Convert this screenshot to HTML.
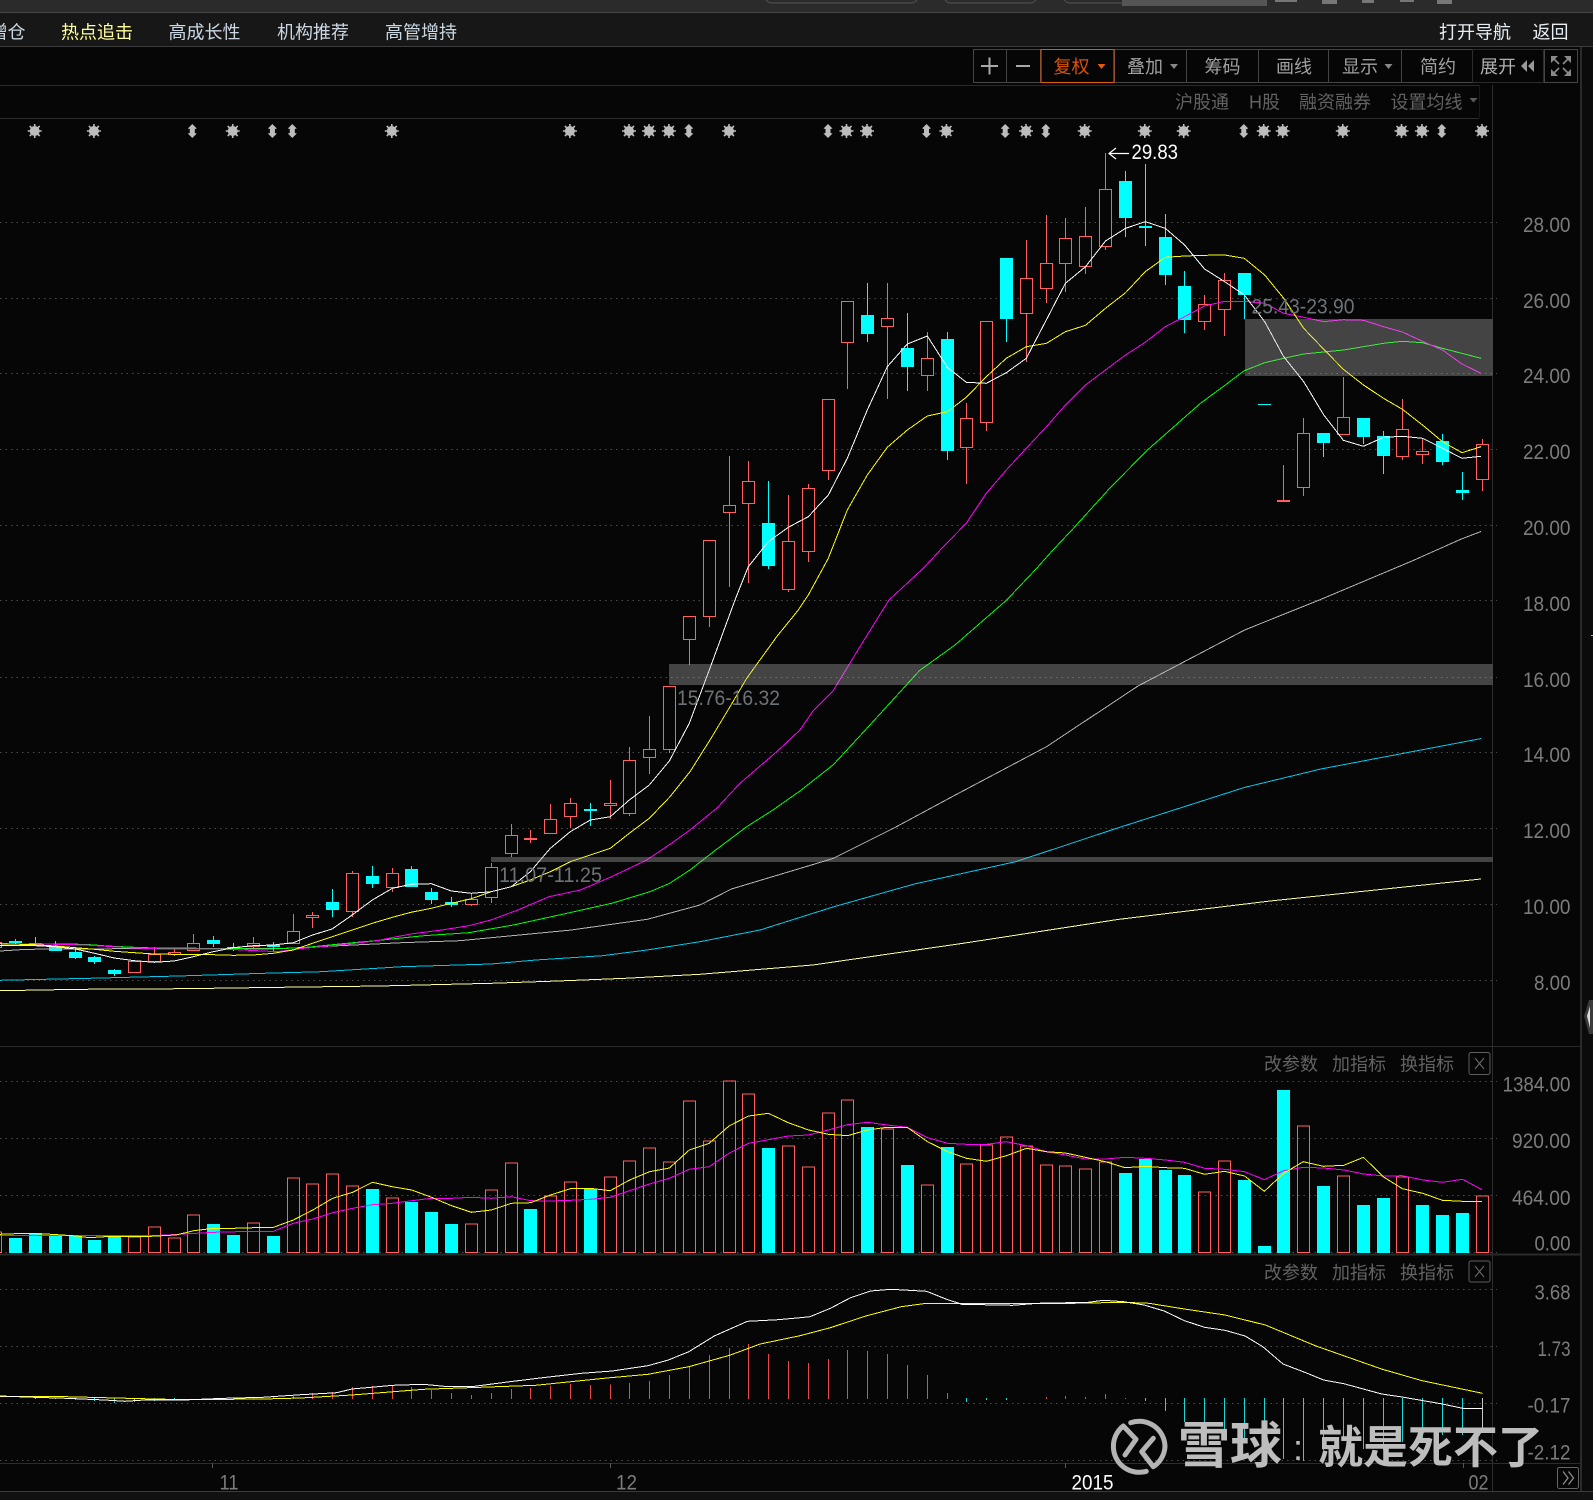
<!DOCTYPE html>
<html lang="zh-CN">
<head>
<meta charset="utf-8">
<title>K线图</title>
<style>
html,body{margin:0;padding:0;width:1593px;height:1500px;overflow:hidden;background:#060606}
svg{display:block}
text{font-family:"Liberation Sans","Noto Sans CJK SC",sans-serif}
.ax{font-size:21px;fill:#7c7c7c}
.cn{font-size:18px}
.nv{font-size:18px;fill:#cbd8e4}
.tb{font-size:18px;fill:#a0a0a0}
.op{font-size:18px;fill:#626262}
.lb{font-size:21px;fill:#6d7277}
.ma{fill:none;stroke-width:1;stroke-linejoin:round;shape-rendering:crispEdges}
</style>
</head>
<body>
<svg xmlns="http://www.w3.org/2000/svg" width="1593" height="1500" viewBox="0 0 1593 1500">
<rect width="1593" height="1500" fill="#060606"/>
<!-- top chrome -->
<rect width="1593" height="12" fill="#2b2b2b"/>
<rect y="12" width="1593" height="1" fill="#484848"/>
<rect y="13" width="1593" height="33" fill="#171717"/>
<rect y="46" width="1593" height="1" fill="#3c3c3c"/>
<g fill="none" stroke="#555">
<rect x="765" y="-12" width="153" height="15" rx="7"/>
<rect x="944" y="-12" width="93" height="15" rx="7"/>
<rect x="1063" y="-12" width="120" height="15" rx="7"/>
</g>
<rect x="1122" y="0" width="145" height="6" fill="#555"/>
<g fill="#777">
<rect x="1275" y="0" width="22" height="2"/><rect x="1322" y="0" width="15" height="4"/><rect x="1362" y="0" width="12" height="3"/><rect x="1400" y="0" width="14" height="2"/><rect x="1437" y="0" width="15" height="4"/>
</g>
<text class="nv" x="-10.5" y="38.5">增仓</text>
<text class="nv" x="61" y="38.5" style="fill:#ffff99">热点追击</text>
<text class="nv" x="168.5" y="38.5">高成长性</text>
<text class="nv" x="277" y="38.5">机构推荐</text>
<text class="nv" x="385" y="38.5">高管增持</text>
<text class="nv" x="1439" y="38.5" style="fill:#e6eef4">打开导航</text>
<text class="nv" x="1532.5" y="38.5" style="fill:#e6eef4">返回</text>

<!-- toolbar -->
<g fill="none" stroke="#454545">
<rect x="973.5" y="49.5" width="33" height="33"/>
<rect x="1006.5" y="49.5" width="34" height="33"/>
<rect x="1114.5" y="49.5" width="72" height="33"/>
<rect x="1186.5" y="49.5" width="72" height="33"/>
<rect x="1258.5" y="49.5" width="70" height="33"/>
<rect x="1328.5" y="49.5" width="73" height="33"/>
<rect x="1401.5" y="49.5" width="71" height="33"/>
<rect x="1472.5" y="49.5" width="71" height="33" stroke="#2c2c2c"/>
<rect x="1544.5" y="49.5" width="33" height="33"/>
</g>
<rect x="1041" y="49.5" width="73" height="33" fill="none" stroke="#dd5a10"/>
<path d="M981 66h17M989.5 57.5v17M1016 66h14" stroke="#a8a8a8" stroke-width="2" fill="none"/>
<text class="tb" x="1053.5" y="73" style="fill:#d9520c">复权</text>
<path d="M1097.5 64h8l-4 5z" fill="#e05a10"/>
<text class="tb" x="1127" y="73">叠加</text>
<path d="M1170 64h8l-4 5z" fill="#888"/>
<text class="tb" x="1204.5" y="73">筹码</text>
<text class="tb" x="1276" y="73">画线</text>
<text class="tb" x="1342" y="73">显示</text>
<path d="M1384.5 64h8l-4 5z" fill="#888"/>
<text class="tb" x="1420" y="73">简约</text>
<text class="tb" x="1480" y="73" style="fill:#b0b0b0">展开</text>
<path d="M1527 60v12l-6-6zM1534 60v12l-6-6z" fill="#999"/>
<g fill="#8a8a8a">
<path d="M1551 56h7l-7 7zM1571 56h-7l7 7zM1551 76h7l-7-7zM1571 76h-7l7-7z"/>
</g>
<path d="M1553 58l6 6M1569 58l-6 6M1553 74l6-6M1569 74l-6-6" stroke="#8a8a8a" stroke-width="1.6" fill="none"/>

<!-- row 2 -->
<text class="op" x="1175" y="108.5">沪股通</text>
<text class="op" x="1249" y="108.5">H股</text>
<text class="op" x="1299" y="108.5">融资融券</text>
<text class="op" x="1390.5" y="108.5">设置均线</text>
<path d="M1469.5 98h8l-4 4.5z" fill="#5c5c5c"/>
<path d="M0 85.5H1479M0 118.5H1479" stroke="#2a2a2a"/>
<path d="M1479.5 85V118" stroke="#181818"/>

<!-- panel frame -->
<path d="M1492.5 85V1491.5" stroke="#2e2e2e"/>
<rect x="1580" y="47" width="2" height="1444" fill="#2a2a2a"/>
<rect x="1582" y="47" width="11" height="1453" fill="#0b0b0b"/>
<path d="M0 1046.5H1580M0 1463.5H1580" stroke="#2c2c2c"/>
<rect y="1253.5" width="1580" height="2" fill="#2a2a2a"/>
<rect y="1491" width="1593" height="1" fill="#3c3c3c"/>
<rect y="1492" width="1593" height="8" fill="#111"/>
<path d="M1589 1000l-5 16 5 18h4v-34z" fill="#3a3a3a"/>
<path d="M1590 1006l-3 10 3 12z" fill="#ddd"/>
<rect x="1591" y="635" width="2" height="1" fill="#cc0"/>

<!-- grid -->
<g stroke="#4c4c4c" stroke-dasharray="1.5 4" fill="none">
<path d="M0 222.5H1497M0 298.5H1497M0 373.5H1497M0 449.5H1497M0 525.5H1497M0 600.5H1497M0 677.5H1497M0 752.5H1497M0 828.5H1497M0 904.5H1497M0 980.5H1497"/>
<path d="M0 1081.5H1497M0 1138.5H1497M0 1195.5H1497M0 1252.5H1497"/>
<path d="M0 1289.5H1497M0 1346.5H1497M0 1403.5H1497M0 1460.5H1497"/>
</g>

<!-- signal marks -->
<defs>
<g id="st"><circle r="5" fill="#bcbcbc"/><path d="M0-7V7M-7 0H7M-5-5L5 5M-5 5L5-5" stroke="#bcbcbc" stroke-width="1.6"/></g>
<path id="ar" d="M0-7l4.5 4.5-2 .5v4l2 .5-4.5 4.5-4.5-4.5 2-.5v-4l-2-.5z" fill="#bcbcbc"/>
</defs>
<g transform="translate(0 131)">
<use href="#st" x="34.7"/><use href="#st" x="93.9"/><use href="#ar" x="192.3"/><use href="#st" x="232.7"/><use href="#ar" x="272.4"/><use href="#ar" x="292.3"/><use href="#st" x="391.8"/><use href="#st" x="569.9"/><use href="#st" x="629"/><use href="#st" x="649"/><use href="#st" x="668.9"/><use href="#ar" x="688.8"/><use href="#st" x="729"/><use href="#ar" x="828"/><use href="#st" x="846.5"/><use href="#st" x="867"/><use href="#ar" x="926.5"/><use href="#st" x="946.4"/><use href="#ar" x="1005.2"/><use href="#st" x="1026"/><use href="#ar" x="1045.8"/><use href="#st" x="1084.7"/><use href="#st" x="1144.8"/><use href="#st" x="1183.7"/><use href="#ar" x="1243.8"/><use href="#st" x="1263.7"/><use href="#st" x="1282.7"/><use href="#st" x="1342.8"/><use href="#st" x="1401.5"/><use href="#st" x="1421.9"/><use href="#ar" x="1441.8"/><use href="#st" x="1482"/>
</g>

<!-- red wicks -->
<path fill="none" stroke="#ff5f5f" d="M1482.5 439V491M1422.5 439V464M1402.5 399V460M1343.5 377V434M1303.5 418V496M1283.5 465V501M1224.5 273V336M1204.5 295V330M1105.5 153V250M1085.5 207V274M1065.5 218V292M1046.5 215V303M1026.5 240V362M986.5 321V431M966.5 403V484M927.5 332V391M887.5 283V399M847.5 301V389M828.5 399V480M808.5 484V562M788.5 495V592M748.5 461V583M729.5 456V587M709.5 540V627M689.5 616V665M669.5 686V753M649.5 716V774M629.5 747V816M610.5 780V819M570.5 798V828M550.5 804V833M530.5 830V843M511.5 824V857M491.5 863V903M471.5 893V906M392.5 868V892M352.5 871V917M312.5 912V928M293.5 914V944M253.5 937V948M193.5 934V951M174.5 949V956M154.5 947V963M134.5 961V973"/>
<!-- red bodies -->
<path fill="#060606" stroke="#ff5f5f" d="M1476.5 444.5h12v35h-12zM1416.5 451.5h12v3h-12zM1396.5 429.5h12v27h-12zM1337.5 417.5h12v17h-12zM1297.5 433.5h12v54h-12zM1218.5 280.5h12v29h-12zM1198.5 304.5h12v17h-12zM1099.5 189.5h12v57h-12zM1079.5 236.5h12v30h-12zM1059.5 238.5h12v25h-12zM1040.5 263.5h12v25h-12zM1020.5 278.5h12v35h-12zM980.5 321.5h12v101h-12zM960.5 418.5h12v29h-12zM921.5 358.5h12v17h-12zM881.5 318.5h12v8h-12zM841.5 301.5h12v41h-12zM822.5 399.5h12v71h-12zM802.5 488.5h12v63h-12zM782.5 541.5h12v48h-12zM742.5 481.5h12v22h-12zM723.5 505.5h12v7h-12zM703.5 540.5h12v76h-12zM683.5 616.5h12v23h-12zM663.5 686.5h12v63h-12zM643.5 749.5h12v8h-12zM623.5 760.5h12v53h-12zM604.5 803.5h12v2h-12zM564.5 803.5h12v13h-12zM544.5 819.5h12v14h-12zM505.5 835.5h12v18h-12zM485.5 867.5h12v30h-12zM465.5 899.5h12v5h-12zM386.5 873.5h12v14h-12zM346.5 873.5h12v38h-12zM306.5 915.5h12v2h-12zM287.5 931.5h12v12h-12zM247.5 943.5h12v3h-12zM187.5 943.5h12v7h-12zM168.5 952.5h12v2h-12zM148.5 954.5h12v7h-12zM128.5 961.5h12v11h-12zM-10.5 942.5h12v5h-12z"/>
<path fill="#ff5f5f" d="M1277 500h13v2h-13zM524 838h13v2h-13z"/>
<!-- cyan wicks -->
<path fill="none" stroke="#00ffff" d="M1462.5 472V500M1442.5 434V465M1383.5 431V474M1363.5 418V444M1323.5 433V457M1244.5 273V319M1184.5 271V333M1165.5 214V285M1145.5 164V246M1125.5 171V237M1006.5 258V342M947.5 332V460M907.5 313V391M867.5 283V342M768.5 481V569M590.5 803V826M451.5 897V907M431.5 888V904M411.5 866V887M372.5 866V888M332.5 889V917M273.5 942V951M233.5 943V951M213.5 936V947M114.5 969V976M94.5 956V964M75.5 948V959M55.5 941V951M35.5 937V945M15.5 939V944"/>
<!-- cyan bodies -->
<path fill="#00ffff" d="M1456 490h13v3h-13zM1436 441h13v21h-13zM1377 436h13v20h-13zM1357 418h13v19h-13zM1317 433h13v10h-13zM1258 404h13v1h-13zM1238 273h13v22h-13zM1178 286h13v34h-13zM1159 237h13v38h-13zM1139 226h13v2h-13zM1119 181h13v37h-13zM1000 258h13v61h-13zM941 339h13v112h-13zM901 348h13v19h-13zM861 315h13v19h-13zM762 523h13v43h-13zM584 809h13v2h-13zM445 902h13v3h-13zM425 892h13v8h-13zM405 869h13v18h-13zM366 876h13v8h-13zM326 902h13v8h-13zM267 945h13v2h-13zM227 947h13v2h-13zM207 940h13v4h-13zM108 970h13v4h-13zM88 957h13v5h-13zM69 952h13v6h-13zM49 946h13v5h-13zM29 943h13v2h-13zM9 941h13v2h-13z"/>

<!-- moving averages -->
<polyline class="ma" stroke="#ffff99" points="0,990.7 80,989.3 183,988.7 281,987.3 379.5,986 491,983.3 558,981 625,978.3 700,974.3 812.8,965 965,943 1117.6,919.5 1270,901 1481,879"/>
<polyline class="ma" stroke="#00c8ea" points="0,980.3 89,978.3 178.6,976 263.4,973.3 321.4,971.7 401.8,966.7 491,964 535.7,960 602.7,955.7 647,950 700,941.7 760,930 833,907 914.4,884 1016,861.6 1117.6,828 1244.6,787.4 1320.8,769 1481,738.6"/>
<polyline class="ma" stroke="#b4b4b4" points="0,951 26.8,949.3 75.9,949 178.6,948.3 285.7,948.3 339.3,945.7 401.8,942.7 459.8,940.7 526.8,934.3 571.4,930 611.6,924.3 647.3,919.3 700,905 731.5,889 833,858.5 894,828 960,792.5 1046.5,746.7 1138,686 1244.6,630 1320.8,599.4 1412,561 1461.4,539 1481,531.5"/>
<polyline class="ma" stroke="#00ff00" points="0,943.7 84.8,944.3 107,946 142.9,947.7 267.9,949 303.6,947.7 339.3,944 375,940.7 424,935.7 468.8,932.7 513.4,925 567,913.3 611.6,903.3 650,891.7 669.6,883.3 690,870 720,846.7 746.7,826.7 773,810 800,791 833,765 864,731.5 919.5,670.6 955,645 1006.7,600 1036.7,568.3 1050,553.3 1062.4,540 1071.9,530 1109.7,488.3 1147.5,450 1181.5,420 1200.5,403.3 1223,386.7 1244.3,370.7 1264.7,362.7 1283.7,358.3 1303.7,354 1323.8,352 1343.4,350 1363.5,346.7 1383.5,343.3 1402.4,341.3 1422.5,342.7 1442.5,348.3 1481,358.3"/>
<polyline class="ma" stroke="#ff00ff" points="0,943.7 58,944.3 84.8,945 134,948 165,949 223,949 276.8,951.7 303.6,948.3 339.3,945 375,941 410.7,934 442,930 468.8,925.7 491,920 517.9,910 549,896.7 580.4,890 611.6,876.7 646.7,860 666.7,846.7 690,830 716.7,808.3 740,783.3 776.7,751.7 800,730 813,711 833,691 861,645 889,600 923.3,568.3 943.3,546.7 966.3,523.3 986.3,493.3 1006.3,470 1026.3,448.3 1046.5,426.7 1065.4,405 1085.5,385 1105.5,370 1125.6,355 1145.2,342.3 1165.3,326.7 1184.6,316.7 1204.6,306 1224.7,301.3 1244.3,301.3 1264.7,303.3 1283.7,313.3 1303.7,317.3 1323.8,321.7 1343.4,319.7 1363.5,320.3 1383.5,326.7 1402.4,332 1422.5,341.3 1442.5,350 1462,364 1481,373.3"/>
<polyline class="ma" stroke="#ffff00" points="0,943.7 35.3,944.7 55.4,946 75.4,947.7 94.6,949.3 114.3,951.3 134.4,952.7 154.5,954 174,954.3 193.3,954.3 213.4,954.7 233,955.3 253,955 273.2,953.3 293.3,950 312.5,943.3 332.1,936.7 352.2,930 372.3,923.3 392.4,917.3 411,912.3 431.3,908.3 451.3,903.3 471.4,898.7 491.3,891.7 511.3,886.7 530.3,880 550.3,871.7 570.3,861.7 590.3,855 610.3,848.3 629.3,833.3 649.3,818.3 670,796.7 690,771.7 710,740 730,706.7 746.7,678.3 776.7,636.7 798.3,610 808.3,595 828.3,558.3 847.3,510 867.3,475 887.3,447.3 907.3,430 927.3,416 947.3,411.7 966.3,397.3 986.3,376.7 1006.3,358.3 1026.3,346.7 1046.5,343.3 1065.4,331.7 1085.5,325.3 1105.5,308.3 1125.6,292.7 1145.2,271.7 1165.3,257.3 1184.6,256 1204.6,255.3 1224.7,255 1244.3,258.3 1264.7,275 1283.7,298.3 1303.7,328.3 1323.8,349.3 1343.4,369.3 1363.5,385 1383.5,398.3 1402.4,409.3 1422.5,425 1442.5,441.7 1462,452.7 1481,446.7"/>
<polyline class="ma" stroke="#ffffff" points="0,945.7 35.3,945.7 55.4,946.7 75.4,949 94.6,953.3 114.3,958 134.4,960.7 154.5,962.3 174,961 193.3,956.7 213.4,951.7 233,947.7 253,945.7 273.2,945 293.3,942.7 312.5,935 332.1,929 352.2,915 372.3,900 392.4,888.3 411,884.3 431.3,883.7 451.3,891 471.4,893.3 491.3,891.7 511.3,886.7 530.3,871.7 550.3,848.3 570.3,831.7 590.3,820 610.3,816.7 629.3,800 649.3,785 669.3,761 689.3,723.3 709.3,670 735,600 748.3,566.7 768.3,541.7 788.3,527.3 808.3,516.7 828.3,495 847.3,458.3 867.3,410 887.3,366.7 907.3,344 927.3,336 947.3,367.3 966.3,382.3 986.3,383.3 1006.3,372.7 1026.3,358.3 1046.3,320 1065.4,283.3 1085.5,266.7 1105.5,241 1125.6,228.3 1145.2,221.7 1165.3,228.3 1184.6,245 1204.6,269 1224.7,281.7 1244.3,295 1264.7,321.7 1283.7,356.7 1303.7,381.7 1323.8,415 1343.4,440.3 1363.5,446.3 1383.5,437.3 1402.4,436.3 1422.5,438.3 1442.5,448.3 1462,458.3 1481,456.3"/>

<!-- price zones -->
<g fill="rgba(190,190,190,.34)">
<rect x="1245" y="319" width="247.5" height="57"/>
<rect x="669" y="664" width="823.5" height="21"/>
<rect x="491" y="857" width="1001.5" height="5"/>
</g>
<text class="lb" x="1251.5" y="313.5" textLength="103" lengthAdjust="spacingAndGlyphs">25.43-23.90</text>
<text class="lb" x="677" y="705" textLength="103" lengthAdjust="spacingAndGlyphs">15.76-16.32</text>
<text class="lb" x="499" y="882" textLength="103" lengthAdjust="spacingAndGlyphs">11.07-11.25</text>

<!-- high marker -->
<path d="M1129 153.5H1109M1116 148l-7 5.5 7 5.5" fill="none" stroke="#fff" stroke-width="1.2"/>
<text x="1131.5" y="159" font-size="21" fill="#fff" textLength="46.5" lengthAdjust="spacingAndGlyphs">29.83</text>

<!-- price axis -->
<g class="ax">
<text class="ax" x="1523" y="232" textLength="47.5" lengthAdjust="spacingAndGlyphs">28.00</text>
<text class="ax" x="1523" y="308" textLength="47.5" lengthAdjust="spacingAndGlyphs">26.00</text>
<text class="ax" x="1523" y="383" textLength="47.5" lengthAdjust="spacingAndGlyphs">24.00</text>
<text class="ax" x="1523" y="459" textLength="47.5" lengthAdjust="spacingAndGlyphs">22.00</text>
<text class="ax" x="1523" y="535" textLength="47.5" lengthAdjust="spacingAndGlyphs">20.00</text>
<text class="ax" x="1523" y="611" textLength="47.5" lengthAdjust="spacingAndGlyphs">18.00</text>
<text class="ax" x="1523" y="687" textLength="47.5" lengthAdjust="spacingAndGlyphs">16.00</text>
<text class="ax" x="1523" y="762" textLength="47.5" lengthAdjust="spacingAndGlyphs">14.00</text>
<text class="ax" x="1523" y="838" textLength="47.5" lengthAdjust="spacingAndGlyphs">12.00</text>
<text class="ax" x="1523" y="914" textLength="47.5" lengthAdjust="spacingAndGlyphs">10.00</text>
<text class="ax" x="1534" y="990" textLength="36.5" lengthAdjust="spacingAndGlyphs">8.00</text>
<text class="ax" x="1502.5" y="1091.5" textLength="68" lengthAdjust="spacingAndGlyphs">1384.00</text>
<text class="ax" x="1512" y="1148" textLength="58.5" lengthAdjust="spacingAndGlyphs">920.00</text>
<text class="ax" x="1512" y="1205" textLength="58.5" lengthAdjust="spacingAndGlyphs">464.00</text>
<text class="ax" x="1534.5" y="1250.5" textLength="36" lengthAdjust="spacingAndGlyphs">0.00</text>
<text class="ax" x="1534.5" y="1299.5" textLength="36" lengthAdjust="spacingAndGlyphs">3.68</text>
<text class="ax" x="1537.5" y="1356" textLength="33" lengthAdjust="spacingAndGlyphs">1.73</text>
<text class="ax" x="1527.5" y="1412.5" textLength="43" lengthAdjust="spacingAndGlyphs">-0.17</text>
<text class="ax" x="1527.5" y="1459.5" textLength="43" lengthAdjust="spacingAndGlyphs">-2.12</text>
</g>

<!-- volume panel -->
<text class="op" x="1264" y="1070.5">改参数</text>
<text class="op" x="1332" y="1070.5">加指标</text>
<text class="op" x="1400" y="1070.5">换指标</text>
<rect x="1469" y="1052.5" width="21" height="22" rx="2" fill="none" stroke="#5e5e5e"/>
<path d="M1475 1058l9 11M1484 1058l-9 11" stroke="#6e6e6e" fill="none"/>

<path fill="none" stroke="#ff5f5f" d="M1476.5 1196h12V1252.5h-12zM1396.5 1177h12V1252.5h-12zM1337.5 1176h12V1252.5h-12zM1297.5 1126h12V1252.5h-12zM1218.5 1161h12V1252.5h-12zM1198.5 1192h12V1252.5h-12zM1099.5 1162h12V1252.5h-12zM1079.5 1169h12V1252.5h-12zM1059.5 1166h12V1252.5h-12zM1040.5 1165h12V1252.5h-12zM1020.5 1146h12V1252.5h-12zM1000.5 1137h12V1252.5h-12zM980.5 1145h12V1252.5h-12zM960.5 1164h12V1252.5h-12zM921.5 1185h12V1252.5h-12zM881.5 1129h12V1252.5h-12zM841.5 1100h12V1252.5h-12zM822.5 1113h12V1252.5h-12zM802.5 1167h12V1252.5h-12zM782.5 1146h12V1252.5h-12zM742.5 1094h12V1252.5h-12zM723.5 1081h12V1252.5h-12zM703.5 1141h12V1252.5h-12zM683.5 1101h12V1252.5h-12zM663.5 1162h12V1252.5h-12zM643.5 1148h12V1252.5h-12zM623.5 1161h12V1252.5h-12zM604.5 1177h12V1252.5h-12zM564.5 1182h12V1252.5h-12zM544.5 1196h12V1252.5h-12zM505.5 1163h12V1252.5h-12zM485.5 1190h12V1252.5h-12zM465.5 1224h12V1252.5h-12zM386.5 1198h12V1252.5h-12zM346.5 1186h12V1252.5h-12zM326.5 1174h12V1252.5h-12zM306.5 1184h12V1252.5h-12zM287.5 1178h12V1252.5h-12zM247.5 1223h12V1252.5h-12zM187.5 1215h12V1252.5h-12zM168.5 1238h12V1252.5h-12zM148.5 1227h12V1252.5h-12zM128.5 1237h12V1252.5h-12zM-10.5 1232h12V1252.5h-12z"/>
<path fill="#00ffff" d="M1456 1213h13V1253h-13zM1436 1215h13V1253h-13zM1416 1205h13V1253h-13zM1377 1198h13V1253h-13zM1357 1205h13V1253h-13zM1317 1186h13V1253h-13zM1277 1090h13V1253h-13zM1258 1246h13V1253h-13zM1238 1180h13V1253h-13zM1178 1175h13V1253h-13zM1159 1170h13V1253h-13zM1139 1159h13V1253h-13zM1119 1173h13V1253h-13zM941 1147h13V1253h-13zM901 1165h13V1253h-13zM861 1127h13V1253h-13zM762 1148h13V1253h-13zM584 1189h13V1253h-13zM524 1209h13V1253h-13zM445 1224h13V1253h-13zM425 1212h13V1253h-13zM405 1202h13V1253h-13zM366 1189h13V1253h-13zM267 1236h13V1253h-13zM227 1235h13V1253h-13zM207 1224h13V1253h-13zM108 1237h13V1253h-13zM88 1240h13V1253h-13zM69 1236h13V1253h-13zM49 1236h13V1253h-13zM29 1233h13V1253h-13zM9 1238h13V1253h-13z"/>
<polyline class="ma" stroke="#ff00ff" points="0,1235.7 30.6,1235.7 153,1235.7 178.6,1234.3 214,1232.3 253.6,1231.3 273.5,1231.3 293.4,1223.3 312.8,1219 332.7,1212.7 352.6,1208.3 372.4,1204.7 392.3,1203.3 411.7,1200.7 431.6,1198.3 451.5,1198.3 471.4,1197.3 491.3,1198.3 511.2,1196.7 530.6,1200.7 550.5,1201 570.4,1200.3 590.3,1199.3 610.2,1197.3 629.6,1190.7 649.5,1184 669.4,1178.3 689.3,1169.3 709.2,1166.7 729,1153.3 748.5,1143.3 768.4,1139.7 788.3,1136 808.6,1135 828.3,1130 847.5,1124.7 867.3,1122.3 887,1125 907.2,1127.3 927.5,1137.7 947.7,1143.3 966.4,1144.3 986.6,1144.3 1006.4,1141.7 1026.6,1145.7 1046.3,1151.7 1065.5,1155 1085.3,1159 1105.5,1159 1125.2,1157.3 1145.5,1158.3 1165.2,1160 1184.4,1162.3 1204.6,1168.3 1224.4,1169.3 1244.6,1171.7 1264.3,1179.7 1283.6,1170.7 1303.3,1167.3 1323.5,1168 1343.8,1170 1363.5,1174 1383.2,1176 1402.4,1175.7 1422.7,1180 1442.4,1182.3 1462.6,1179.3 1482,1189.7"/>
<polyline class="ma" stroke="#ffff00" points="0,1234.3 25.5,1233.3 51,1234.3 76.5,1236 89.3,1237.7 104.6,1236.7 143,1236.7 176,1235 193.9,1230.7 213.8,1228.3 233.7,1228.3 253.6,1227.7 273.5,1227.3 293.4,1220 312.8,1210 332.7,1198.3 352.6,1192.3 372.4,1182.3 392.3,1186.7 411.7,1190 431.6,1197.3 451.5,1205.7 471.4,1212.3 491.3,1210 511.2,1203.3 530.6,1202.7 550.5,1195 570.4,1188.7 590.3,1188.3 610.2,1190.7 629.6,1180 649.5,1171.7 669.4,1168 689.3,1150 709.2,1143.3 729,1126 748.5,1116 768.4,1113.3 788.3,1122.7 808.6,1130 828.3,1134.3 847.5,1135.7 867.3,1130 887,1127.3 907.2,1127.3 927.5,1141.7 947.7,1151.7 966.4,1158.3 986.6,1161.3 1006.4,1155.7 1026.6,1148.3 1046.3,1151.7 1065.5,1153 1085.3,1157.3 1105.5,1161.7 1125.2,1167.7 1145.5,1166.3 1165.2,1167.7 1184.4,1168.3 1204.6,1174.3 1224.4,1171.3 1244.6,1176 1264.3,1191.3 1283.6,1173.3 1303.3,1161.7 1323.5,1166.3 1343.8,1165.3 1363.5,1157.3 1383.2,1176.7 1402.4,1188.7 1422.7,1193.3 1442.4,1200.3 1462.6,1201.3 1482,1201.3"/>

<!-- MACD panel -->
<text class="op" x="1264" y="1279">改参数</text>
<text class="op" x="1332" y="1279">加指标</text>
<text class="op" x="1400" y="1279">换指标</text>
<rect x="1469" y="1261" width="21" height="21" rx="2" fill="none" stroke="#5e5e5e"/>
<path d="M1475 1266l9 11M1484 1266l-9 11" stroke="#6e6e6e" fill="none"/>

<path fill="none" stroke="#e84848" d="M213.5 1399V1398M233.5 1399V1397.7M253.5 1399V1397M273.5 1399V1397M293.5 1399V1396M312.5 1399V1393M332.5 1399V1392M352.5 1399V1387M372.5 1399V1386M392.5 1399V1385.5M411.5 1399V1387M431.5 1399V1390M451.5 1399V1393M471.5 1399V1395M491.5 1399V1393M511.5 1399V1389M530.5 1399V1388M550.5 1399V1386M570.5 1399V1384M590.5 1399V1385M610.5 1399V1384.5M629.5 1399V1383M649.5 1399V1381M669.5 1399V1375M689.5 1399V1366.5M709.5 1399V1355M729.5 1399V1348M748.5 1399V1344M768.5 1399V1354M788.5 1399V1361M808.5 1399V1363M828.5 1399V1359M847.5 1399V1350M867.5 1399V1351M887.5 1399V1354M907.5 1399V1365M927.5 1399V1375M947.5 1399V1393M1046.5 1399V1397M1065.5 1399V1396M1085.5 1399V1397M1105.5 1399V1394M1125.5 1399V1398"/>
<path fill="none" stroke="#18d8d8" d="M35.5 1398V1399M55.5 1398V1399M75.5 1398V1400M94.5 1398V1401M114.5 1398V1403M134.5 1398V1402M154.5 1398V1401M174.5 1398V1400M966.5 1398V1402M986.5 1398V1400M1006.5 1398V1400M1145.5 1398V1401M1165.5 1398V1411M1184.5 1398V1422M1204.5 1398V1422M1224.5 1398V1430M1244.5 1398V1441M1264.5 1398V1450M1283.5 1398V1459M1303.5 1398V1461M1323.5 1398V1450M1343.5 1398V1440M1363.5 1398V1449M1383.5 1398V1450M1402.5 1398V1442M1422.5 1398V1440M1442.5 1398V1435M1462.5 1398V1435"/>
<path fill="none" stroke="#c8c8c8" d="M1482.5 1398V1428"/>
<polyline class="ma" stroke="#ffff00" points="0,1396.3 66,1396.7 142.9,1398.7 183.7,1399.7 262.8,1399 301,1398 352,1395 423.5,1389.3 479.6,1387.3 535.7,1385.3 607,1378 648,1374.3 688.8,1366.7 729.6,1355.3 760.2,1344 800,1335.7 830.4,1327.7 865.8,1316 901.2,1306.7 926.5,1303.3 966.9,1303.7 1052.9,1303.7 1123.7,1302.3 1149,1303.3 1184.4,1309 1224.9,1315 1265.4,1325 1316,1346 1382.4,1369.3 1422.2,1380.7 1482.4,1393.3"/>
<polyline class="ma" stroke="#ffffff" points="0,1396 25.5,1397 66,1398.3 104.6,1400 125,1401.3 144.4,1400 183.7,1400 224.5,1398.3 262.8,1397.3 301,1394.7 336.7,1392.7 352,1389 392.9,1385.3 423.5,1384.3 444,1386.3 474.5,1386.3 510,1381.7 546,1377.3 581.6,1373.3 612.2,1371 648,1365.7 668.4,1360 688.8,1351.7 714.3,1336 747.4,1321.3 778,1319.7 800,1317.7 810,1316.7 830.4,1308.3 850.6,1297.7 870.8,1291 891,1289.3 926.5,1291.3 946.7,1299.3 961.9,1304.3 1012.4,1305.3 1037.7,1303.3 1088.3,1302.3 1103.5,1300.3 1123.7,1301.7 1144,1305 1164.2,1311 1184.4,1320.7 1204.6,1327.3 1224.9,1330.3 1245.1,1336 1262.8,1346.7 1283,1364 1305.8,1372.7 1323.5,1380 1343.8,1383.7 1381.7,1394 1402,1397 1442.4,1404 1462.6,1408.3 1482.4,1408.3"/>

<!-- time axis -->
<path d="M212.5 1463v5M610.5 1463v5M1065.5 1463v5M1463.5 1463v5" stroke="#555"/>
<text class="ax" x="219.5" y="1489.5" textLength="19" lengthAdjust="spacingAndGlyphs">11</text>
<text class="ax" x="616" y="1489.5" textLength="21" lengthAdjust="spacingAndGlyphs">12</text>
<text class="ax" x="1071.5" y="1489.5" textLength="42" lengthAdjust="spacingAndGlyphs" style="fill:#fff">2015</text>
<text class="ax" x="1468.5" y="1489.5" textLength="20" lengthAdjust="spacingAndGlyphs">02</text>
<rect x="1557.5" y="1467.5" width="21" height="21" rx="2" fill="none" stroke="#666"/>
<path d="M1563 1471.5l5 6.5-5 6.5M1568.5 1471.5l5 6.5-5 6.5" fill="none" stroke="#8c8c8c" stroke-width="1.3"/>

<!-- watermark -->
<g fill="none" stroke="#b4b4b4" stroke-width="5" stroke-linecap="round" stroke-linejoin="round">
<path d="M1146.3 1471.3A25.8 25.8 0 0 1 1113.4 1446.5A25.8 25.8 0 0 1 1123.3 1426L1136 1439.3L1125 1455"/>
<path d="M1130.7 1422.7A25.8 25.8 0 0 1 1165 1446.5A25.8 25.8 0 0 1 1153.3 1466.7L1141.7 1451.7L1153.3 1438.3"/>
</g>
<g fill="#bdbdbd" font-weight="700">
<text x="1178" y="1463" fill="#bdbdbd" textLength="104" lengthAdjust="spacingAndGlyphs" style="font-size:50px">雪球</text>
<text x="1293" y="1460" fill="#bdbdbd" style="font-size:36px;font-weight:400">:</text>
<text x="1318" y="1463" fill="#bdbdbd" style="font-size:45px">就是死不了</text>
</g>
</svg>
</body>
</html>
